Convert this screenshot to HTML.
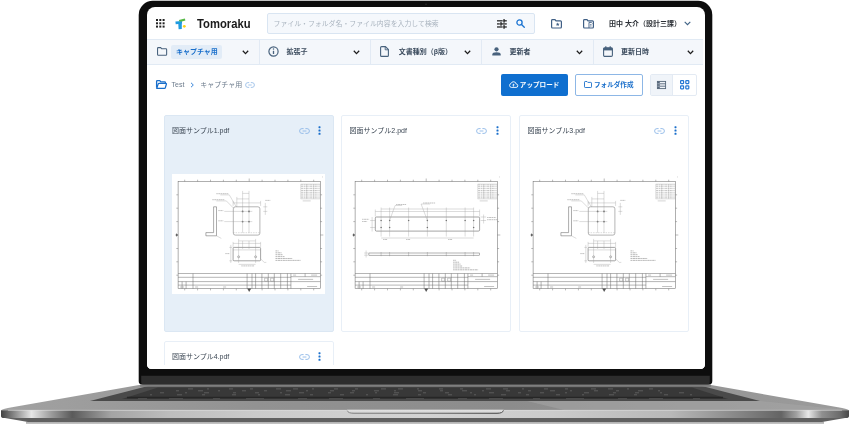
<!DOCTYPE html>
<html lang="ja">
<head>
<meta charset="utf-8">
<title>Tomoraku</title>
<style>
html,body{margin:0;padding:0;background:#fff;}
body{width:850px;height:424px;position:relative;overflow:hidden;font-family:"Liberation Sans","Noto Sans CJK JP",sans-serif;}
#laptop{position:absolute;left:0;top:0;width:850px;height:424px;}
#screen{position:absolute;left:147.2px;top:7px;width:557.6px;height:362px;background:#fff;border-radius:8px 8px 4.5px 4.5px;overflow:hidden;}
#screen *{box-sizing:border-box;}
.abs{position:absolute;}
.t{position:absolute;white-space:nowrap;line-height:10px;font-size:7px;}
.b{font-weight:bold;}
#filter{position:absolute;left:0;top:32px;width:558px;height:26px;background:#f4f7fb;border-top:1px solid #e1e9f3;border-bottom:1px solid #e1e9f3;}
.div{position:absolute;top:33px;width:1px;height:24px;background:#e4ebf4;}
.card{position:absolute;width:170px;height:217px;border:1px solid #e8eff7;border-radius:2px;background:#fff;}
.card.sel{background:#e6eff8;border-color:#dbe7f3;}
.thumb{position:absolute;left:7.2px;top:58.2px;width:153px;height:120px;background:#fff;}
svg{position:absolute;overflow:visible;}
</style>
</head>
<body>
<!-- LAPTOP -->
<svg id="laptop" width="850" height="424" viewBox="0 0 850 424">
<defs>
<linearGradient id="edge" x1="0" x2="1" y1="0" y2="0">
<stop offset="0" stop-color="#424242"/>
<stop offset="0.006" stop-color="#5c5c5c"/>
<stop offset="0.036" stop-color="#e6e6e6"/>
<stop offset="0.060" stop-color="#9a9a9a"/>
<stop offset="0.084" stop-color="#5a5a5a"/>
<stop offset="0.13" stop-color="#a4a4a4"/>
<stop offset="0.2" stop-color="#bebebe"/>
<stop offset="0.3" stop-color="#cbcbcb"/>
<stop offset="0.5" stop-color="#d3d3d3"/>
<stop offset="0.65" stop-color="#cbcbcb"/>
<stop offset="0.79" stop-color="#b8b8b8"/>
<stop offset="0.83" stop-color="#a0a0a0"/>
<stop offset="0.87" stop-color="#868686"/>
<stop offset="0.92" stop-color="#646464"/>
<stop offset="0.938" stop-color="#a0a0a0"/>
<stop offset="0.952" stop-color="#e8e8e8"/>
<stop offset="0.968" stop-color="#909090"/>
<stop offset="0.99" stop-color="#6a6a6a"/>
<stop offset="1" stop-color="#484848"/>
</linearGradient>
<linearGradient id="top" x1="0" x2="1" y1="0" y2="0">
<stop offset="0" stop-color="#a2a2a2"/>
<stop offset="0.3" stop-color="#929292"/>
<stop offset="0.6" stop-color="#8c8c8c"/>
<stop offset="1" stop-color="#9c9c9c"/>
</linearGradient>
<linearGradient id="notch" x1="0" x2="0" y1="0" y2="1">
<stop offset="0" stop-color="#e4e4e4"/>
<stop offset="0.6" stop-color="#d6d6d6"/>
<stop offset="1" stop-color="#b0b0b0"/>
</linearGradient>
<linearGradient id="notchline" x1="347" x2="504" y1="0" y2="0" gradientUnits="userSpaceOnUse">
<stop offset="0" stop-color="#8a8a8a"/>
<stop offset="0.5" stop-color="#777"/>
<stop offset="1" stop-color="#4a4a4a"/>
</linearGradient>
<linearGradient id="shadow" x1="0" x2="0" y1="0" y2="1">
<stop offset="0" stop-color="#a8a8a8"/>
<stop offset="1" stop-color="#c8c8c8"/>
</linearGradient>
</defs>
<!-- shadow strip -->
<path d="M26 421.5 H824 V424 H26 Z" fill="url(#shadow)"/>
<!-- underside -->
<path d="M2 417.5 L848 417.5 L822 422 L28 422 Z" fill="#606060"/>
<!-- top surface -->
<path d="M1 410.3 Q3 408.8 12 407.3 L139 385 L711 385 L838 407.3 Q847 408.8 849 410.3 Z" fill="url(#top)"/>
<path d="M527 401 L760 401 L849 410.3 L565 410.3 Z" fill="#a6a6a6" opacity="0.55"/>
<!-- keyboard well -->
<path d="M90 401 L148 386 L702 386 L760 401 Z" fill="#4a4a4a"/>
<path d="M122 399 L158 387.4 L692 387.4 L728 399 Z" fill="#383838"/>
<path d="M127 397.5 L723 397.5" stroke="#262626" stroke-width="1.4"/>
<g stroke="#8c8c8c" stroke-width="0.8" fill="none" opacity="0.55">
<path d="M188 388.9 H662" stroke-dasharray="5 14 2 20 4 17 3 23 5 12"/>
<path d="M176 390.8 H674" stroke-dasharray="3 19 5 15 2 22 4 18"/>
<path d="M160 392.8 H690" stroke-dasharray="4 21 2 17 5 24 3 19"/>
<path d="M150 394.8 H700" stroke-dasharray="2 25 5 20 3 27 4 22"/>
</g>
<path d="M138 398.6 H712" stroke="#6a6a6a" stroke-width="0.7" stroke-dasharray="9 22 14 30 7 26 18 34" fill="none" opacity="0.7"/>
<!-- front edge -->
<path d="M1 410.2 L849 410.2 L849 416 Q849 418 846 418 L4 418 Q1 418 1 416 Z" fill="url(#edge)"/>
<rect x="8" y="409.8" width="834" height="0.9" fill="#dcdcdc" opacity="0.55"/>
<!-- notch -->
<path d="M347 409.8 L503.6 409.8 Q503 413.6 497 413.6 L353.5 413.6 Q347.5 413.6 347 409.8 Z" fill="url(#notch)"/>
<path d="M347.3 410.6 Q348 413.3 354 413.3 H497 Q502.8 413.3 503.4 410.4" fill="none" stroke="url(#notchline)" stroke-width="1"/>
<!-- lid -->
<path d="M138.7 15 A14.2 14.2 0 0 1 152.9 0.8 H698.1 A14.2 14.2 0 0 1 712.3 15 V381 Q712.3 384.8 708.5 384.8 H142.5 Q138.7 384.8 138.7 381 Z" fill="#0d0d0d"/>
<path d="M141.2 375.8 H709.8 V382 Q709.8 384.8 707 384.8 H144 Q141.2 384.8 141.2 382 Z" fill="#2d2d2d"/>
<rect x="140" y="384.6" width="571" height="2.2" fill="#7e7e7e"/>
<circle cx="426" cy="4.3" r="0.8" fill="#2c2c2c"/>
</svg>

<!-- SCREEN -->
<div id="screen"><div id="ui" class="abs" style="will-change:transform;left:-147.2px;top:-7px;width:850px;height:424px;">
<!-- header -->
<svg style="left:155.5px;top:19.3px" width="9" height="9" viewBox="0 0 9 9" fill="#222">
<rect x="0" y="0" width="2" height="2"/><rect x="3.3" y="0" width="2" height="2"/><rect x="6.6" y="0" width="2" height="2"/>
<rect x="0" y="3.3" width="2" height="2"/><rect x="3.3" y="3.3" width="2" height="2"/><rect x="6.6" y="3.3" width="2" height="2"/>
<rect x="0" y="6.6" width="2" height="2"/><rect x="3.3" y="6.6" width="2" height="2"/><rect x="6.6" y="6.6" width="2" height="2"/>
</svg>
<svg style="left:175px;top:17.5px" width="12" height="12" viewBox="0 0 12 12">
<path d="M0.4 3.6 L6.9 2.9 L7.1 5.6 L6.8 5.6 L6.8 11 L3.6 11.3 L3.3 5.9 L0.7 6.2 Z" fill="#1e9be0"/>
<path d="M3.9 1.9 L9.9 0.4 L10.4 2.5 L7 3.4 L4.4 3.5 Z" fill="#57b947"/>
<circle cx="9.3" cy="8.3" r="1.4" fill="#fbd21a"/>
</svg>
<div class="t b" id="brand" style="left:196.6px;top:14.8px;font-size:12.3px;line-height:18px;color:#1a1a1a;transform:scaleX(0.915);transform-origin:0 0;">Tomoraku</div>
<div class="abs" style="left:266.5px;top:12.9px;width:268.2px;height:21.5px;background:#f5f8fc;border:1px solid #d9e5f2;border-radius:2px;"></div>
<div class="t" style="left:273.5px;top:18.5px;color:#aab4bf;font-size:6.9px;">ファイル・フォルダ名・ファイル内容を入力して検索</div>
<!-- tune icon -->
<svg style="left:497.3px;top:18.7px" width="9.8" height="9.8" viewBox="0 0 9 9" fill="#222">
<rect x="0" y="1.1" width="5.2" height="1.15"/><rect x="5.9" y="0" width="1.15" height="3.4"/><rect x="5.9" y="1.1" width="3.1" height="1.15"/>
<rect x="0" y="3.95" width="2.6" height="1.15"/><rect x="3.1" y="2.8" width="1.15" height="3.4"/><rect x="3.1" y="3.95" width="5.9" height="1.15"/>
<rect x="0" y="6.75" width="5.2" height="1.15"/><rect x="5.9" y="5.6" width="1.15" height="3.4"/><rect x="5.9" y="6.75" width="3.1" height="1.15"/>
</svg>
<!-- search icon -->
<svg style="left:516px;top:18.7px" width="9" height="9" viewBox="0 0 9 9" fill="none" stroke="#1a73d1" stroke-width="1.3">
<circle cx="3.5" cy="3.5" r="2.6"/><path d="M5.5 5.5 L8.3 8.3" stroke-linecap="round"/>
</svg>
<!-- folder star icon -->
<svg style="left:550.6px;top:18.7px" width="11" height="9.6" viewBox="0 0 11 9.6" fill="none" stroke="#3f5f85" stroke-width="1.2">
<path d="M0.6 1.5 Q0.6 0.6 1.5 0.6 H4 L5 1.9 H9.5 Q10.4 1.9 10.4 2.8 V8.1 Q10.4 9 9.5 9 H1.5 Q0.6 9 0.6 8.1 Z"/>
<path d="M6.7 3.4 L7.3 4.7 L8.6 4.8 L7.6 5.7 L7.9 7 L6.7 6.3 L5.5 7 L5.8 5.7 L4.8 4.8 L6.1 4.7 Z" fill="#3f5f85" stroke="none"/>
</svg>
<!-- folder shared icon -->
<svg style="left:582.5px;top:18.7px" width="11" height="9.6" viewBox="0 0 11 9.6" fill="none" stroke="#3f5f85" stroke-width="1.2">
<path d="M0.6 1.5 Q0.6 0.6 1.5 0.6 H4 L5 1.9 H9.5 Q10.4 1.9 10.4 2.8 V8.1 Q10.4 9 9.5 9 H1.5 Q0.6 9 0.6 8.1 Z"/>
<path d="M6 9 V3.4 H8.3 L9.4 4.5" stroke-width="0.9"/><path d="M7 5.6 H8.6 M7 7 H8.6" stroke-width="0.7"/>
</svg>
<div class="t b" style="left:609px;top:18.5px;color:#2c3036;">田中 大介（設計三課）</div>
<svg style="left:683.7px;top:21.4px" width="7" height="5" viewBox="0 0 7 5" fill="none" stroke="#3f6285" stroke-width="1.1"><path d="M0.7 0.8 L3.5 3.7 L6.3 0.8"/></svg>

<!-- filter bar -->
<div class="abs" style="left:147px;top:39px;width:555.5px;height:26.2px;background:#f4f7fb;border-top:1px solid #e1eaf4;border-bottom:1px solid #e1eaf4;"></div>
<div class="abs" style="left:258.8px;top:40px;width:1px;height:24.2px;background:#e2eaf4;"></div>
<div class="abs" style="left:369.9px;top:40px;width:1px;height:24.2px;background:#e2eaf4;"></div>
<div class="abs" style="left:481.4px;top:40px;width:1px;height:24.2px;background:#e2eaf4;"></div>
<div class="abs" style="left:592.9px;top:40px;width:1px;height:24.2px;background:#e2eaf4;"></div>
<!-- folder icon -->
<svg style="left:156.7px;top:47.1px" width="10.2" height="8.8" viewBox="0 0 11 9" preserveAspectRatio="none" fill="none" stroke="#48627d" stroke-width="1.15">
<path d="M0.6 1.4 Q0.6 0.6 1.4 0.6 H4 L5 1.8 H9.6 Q10.4 1.8 10.4 2.6 V7.6 Q10.4 8.4 9.6 8.4 H1.4 Q0.6 8.4 0.6 7.6 Z"/>
</svg>
<div class="abs" style="left:171.4px;top:44.6px;width:51px;height:14.6px;background:#e2ecf7;border-radius:2px;"></div>
<div class="t b" style="left:175.9px;top:47px;color:#1a6fcb;">キャプチャ用</div>
<svg class="chev" style="left:242px;top:50px" width="7" height="5" viewBox="0 0 7 5" fill="none" stroke="#1d1d1d" stroke-width="1.3"><path d="M0.8 0.8 L3.5 3.6 L6.2 0.8"/></svg>
<!-- info icon -->
<svg style="left:267.7px;top:46.3px" width="11" height="11" viewBox="0 0 11 11" fill="none" stroke="#48627d" stroke-width="1">
<circle cx="5.5" cy="5.5" r="4.6" stroke-width="1.2"/><path d="M5.5 4.8 V8" stroke-width="1.3"/><circle cx="5.5" cy="3.1" r="0.75" fill="#48627d" stroke="none"/>
</svg>
<div class="t b" style="left:286.5px;top:47px;color:#3c4c5e;">拡張子</div>
<svg class="chev" style="left:353px;top:50px" width="7" height="5" viewBox="0 0 7 5" fill="none" stroke="#1d1d1d" stroke-width="1.3"><path d="M0.8 0.8 L3.5 3.6 L6.2 0.8"/></svg>
<!-- doc icon -->
<svg style="left:380.2px;top:46px" width="9" height="11" viewBox="0 0 9 11" fill="none" stroke="#48627d" stroke-width="1.1">
<path d="M0.6 1.6 Q0.6 0.6 1.6 0.6 H5.4 L8.4 3.6 V9.4 Q8.4 10.4 7.4 10.4 H1.6 Q0.6 10.4 0.6 9.4 Z"/><path d="M5.2 0.8 V3.8 H8.2" stroke-width="0.9"/>
</svg>
<div class="t b" style="left:398.7px;top:47px;color:#3c4c5e;">文書種別（β版）</div>
<svg class="chev" style="left:464.3px;top:50px" width="7" height="5" viewBox="0 0 7 5" fill="none" stroke="#1d1d1d" stroke-width="1.3"><path d="M0.8 0.8 L3.5 3.6 L6.2 0.8"/></svg>
<!-- person icon -->
<svg style="left:491.5px;top:47px" width="9" height="9" viewBox="0 0 9 9" fill="#48627d">
<circle cx="4.5" cy="2.3" r="2.1"/><path d="M0.3 8.6 V7.4 Q0.3 5.3 4.5 5.3 Q8.7 5.3 8.7 7.4 V8.6 Z"/>
</svg>
<div class="t b" style="left:509.5px;top:47px;color:#3c4c5e;">更新者</div>
<svg class="chev" style="left:575.8px;top:50px" width="7" height="5" viewBox="0 0 7 5" fill="none" stroke="#1d1d1d" stroke-width="1.3"><path d="M0.8 0.8 L3.5 3.6 L6.2 0.8"/></svg>
<!-- calendar icon -->
<svg style="left:602.5px;top:45.6px" width="10" height="11" viewBox="0 0 10 11" fill="none" stroke="#48627d" stroke-width="1.1">
<rect x="0.6" y="1.8" width="8.8" height="8.6" rx="1.2"/><rect x="0.6" y="1.8" width="8.8" height="2.6" fill="#48627d" stroke="none"/><path d="M2.8 0.3 V2.4 M7.2 0.3 V2.4" stroke-width="1.2"/>
</svg>
<div class="t b" style="left:621px;top:47px;color:#3c4c5e;">更新日時</div>
<svg class="chev" style="left:687.3px;top:50px" width="7" height="5" viewBox="0 0 7 5" fill="none" stroke="#1d1d1d" stroke-width="1.3"><path d="M0.8 0.8 L3.5 3.6 L6.2 0.8"/></svg>

<!-- breadcrumb -->
<svg style="left:156.3px;top:79.9px" width="11" height="9" viewBox="0 0 11 9" fill="none" stroke="#1a6fcb" stroke-width="1.3">
<path d="M0.6 7.6 V1.4 Q0.6 0.6 1.4 0.6 H3.8 L4.8 1.8 H8.6 Q9.4 1.8 9.4 2.6 V3.4"/><path d="M0.7 8.2 L2.2 3.9 Q2.4 3.4 3 3.4 H9.9 Q10.6 3.4 10.4 4.1 L9.3 7.8 Q9.1 8.4 8.5 8.4 H1 Z"/>
</svg>
<div class="t" style="left:171.6px;top:80px;color:#6c7b8c;">Test</div>
<svg style="left:190.2px;top:82.2px" width="5" height="6" viewBox="0 0 5 6" fill="none" stroke="#2f80d8" stroke-width="0.95"><path d="M1 0.8 L3.3 3 L1 5.2"/></svg>
<div class="t" style="left:200.3px;top:80px;color:#6c7b8c;">キャプチャ用</div>
<svg class="lnk" style="left:244.8px;top:82px" width="10" height="6" viewBox="0 0 10 6" fill="none" stroke="#9cbfe8" stroke-width="0.9"><path d="M4.2 0.6 H3 A2.4 2.4 0 0 0 3 5.4 H4.2 M5.8 0.6 H7 A2.4 2.4 0 0 1 7 5.4 H5.8 M3.3 3 H6.7"/></svg>

<!-- buttons -->
<div class="abs" style="left:500.6px;top:74px;width:67px;height:21.5px;background:#0f6fcf;border-radius:2px;"></div>
<svg style="left:509.3px;top:81.3px" width="9" height="7" viewBox="0 0 9 7" fill="none" stroke="#fff" stroke-width="0.9"><path d="M2.3 6.4 A2 2 0 0 1 2 2.5 A2.7 2.7 0 0 1 7.2 3 A1.7 1.7 0 0 1 7 6.4 Z"/><path d="M4.5 5.6 V3.2 M3.4 4.2 L4.5 3.1 L5.6 4.2" stroke-width="0.8"/></svg>
<div class="t b" style="left:519.8px;top:80px;color:#fff;font-size:6.6px;">アップロード</div>
<div class="abs" style="left:575px;top:74px;width:68px;height:21.8px;background:#fff;border:1px solid #8db7e6;border-radius:2px;"></div>
<svg style="left:584px;top:81.3px" width="8" height="7" viewBox="0 0 8 7" fill="none" stroke="#1a6fcb" stroke-width="0.9"><path d="M0.5 1.2 Q0.5 0.5 1.2 0.5 H3 L3.8 1.4 H6.8 Q7.5 1.4 7.5 2.1 V5.8 Q7.5 6.5 6.8 6.5 H1.2 Q0.5 6.5 0.5 5.8 Z"/></svg>
<div class="t b" style="left:594px;top:80px;color:#1a6fcb;font-size:6.6px;">フォルダ作成</div>
<div class="abs" style="left:650px;top:74px;width:46.8px;height:21.8px;background:#fff;border:1px solid #e3eaf3;border-radius:2px;"></div>
<div class="abs" style="left:651px;top:75px;width:21.5px;height:19.8px;background:#f0f4f9;border-right:1px solid #e3eaf3;"></div>
<svg style="left:657.2px;top:81.2px" width="9" height="8" viewBox="0 0 9 8"><rect x="0.4" y="0.4" width="8.2" height="7.2" fill="none" stroke="#56677a" stroke-width="0.9"/><rect x="0.4" y="0.4" width="2.4" height="7.2" fill="#56677a"/><path d="M0.4 2.8 H8.6 M0.4 5.2 H8.6" stroke="#56677a" stroke-width="0.9"/><path d="M0.4 2.8 H2.8 M0.4 5.2 H2.8" stroke="#f0f4f9" stroke-width="0.5"/></svg>
<svg style="left:680.2px;top:80.4px" width="9.4" height="9.4" viewBox="0 0 9.4 9.4" fill="none" stroke="#2477d4" stroke-width="1.2"><rect x="0.6" y="0.6" width="3" height="3" rx="0.5"/><rect x="5.8" y="0.6" width="3" height="3" rx="0.5"/><rect x="0.6" y="5.8" width="3" height="3" rx="0.5"/><rect x="5.8" y="5.8" width="3" height="3" rx="0.5"/></svg>

<!-- cards -->
<div class="card sel" style="left:163.5px;top:114.8px;height:217px;"><div class="t" style="left:7.4px;top:10px;color:#3b4653;">図面サンプル1.pdf</div><svg style="left:134px;top:12.5px" width="11" height="6" viewBox="0 0 11 6" fill="none" stroke="#8fb8e8" stroke-width="0.9"><path d="M4.6 0.6 H3 A2.4 2.4 0 0 0 3 5.4 H4.6 M6.4 0.6 H8 A2.4 2.4 0 0 1 8 5.4 H6.4 M3.6 3 H7.4"/></svg><svg style="left:153.5px;top:10.3px" width="3" height="9" viewBox="0 0 3 9" fill="#1a6fcb"><rect x="0.5" y="0.2" width="2" height="2" rx="0.6"/><rect x="0.5" y="3.5" width="2" height="2" rx="0.6"/><rect x="0.5" y="6.8" width="2" height="2" rx="0.6"/></svg><div class="thumb"><svg width="153" height="120" viewBox="0 0 153 120" style="left:0;top:0;overflow:hidden"><g transform="translate(-0.9,-0.3)"><rect x="7" y="7.8" width="142.2" height="107.1" fill="none" stroke="#6e6e6e" stroke-width="0.55"/><path d="M13.6 6.0 V7.8 M13.6 114.9 V116.7 M26.5 6.0 V7.8 M26.5 114.9 V116.7 M39.4 6.0 V7.8 M39.4 114.9 V116.7 M52.3 6.0 V7.8 M52.3 114.9 V116.7 M65.2 6.0 V7.8 M65.2 114.9 V116.7 M78.1 4.8 V7.8 M78.1 114.9 V117.9 M91.0 6.0 V7.8 M91.0 114.9 V116.7 M103.9 6.0 V7.8 M103.9 114.9 V116.7 M116.8 6.0 V7.8 M116.8 114.9 V116.7 M129.7 6.0 V7.8 M129.7 114.9 V116.7 M142.6 6.0 V7.8 M142.6 114.9 V116.7 M5.2 21.1 H7 M149.2 21.1 H151.0 M5.2 34.5 H7 M149.2 34.5 H151.0 M5.2 47.9 H7 M149.2 47.9 H151.0 M4 61.3 H7 M149.2 61.3 H152.2 M5.2 74.8 H7 M149.2 74.8 H151.0 M5.2 88.1 H7 M149.2 88.1 H151.0 M5.2 101.5 H7 M149.2 101.5 H151.0 " stroke="#777" stroke-width="0.5" fill="none"/><path d="M5 59.5 L7 61.3 L5 63.1 Z M76 114.9 L78.1 118 L80.2 114.9 Z" fill="#555"/><path d="M7 99.8 H149.2 M7 103.6 H120 M7 107.9 H149.2 M7 111.4 H120 M21.9 99.8 V114.9 M76 99.8 V114.9 M80.9 99.8 V114.9 M84.5 99.8 V114.9 M90.8 99.8 V114.9 M97.2 99.8 V114.9 M103.2 99.8 V114.9 M109.6 99.8 V114.9 M116.3 99.8 V114.9 M119.8 99.8 V114.9 M119.8 103 H149.2 M134 99.8 V103 M11 107.9 V114.9 M15 107.9 V114.9 " stroke="#6a6a6a" stroke-width="0.5" fill="none"/><path d="M93.5 104.5 h3 v3 h-3 Z M99.5 104.5 h3 v3 h-3 Z" stroke="#777" stroke-width="0.4" fill="none"/><path d="M127 105.7 H142 M136 112.8 H146 M9 113.3 H13 M24 113.3 H27 M52 113.3 H55 M140 101.4 H146 M122 101.4 H125" stroke="#999" stroke-width="0.6" fill="none"/><path d="M130 11.2 H148.6 M130 13.0 H148.6 M130 14.9 H148.6 M130 16.8 H148.6 M130 18.6 H148.6 M130 20.4 H148.6 M130 22.3 H148.6 M130 24.1 H148.6 " stroke="#999" stroke-width="0.55" stroke-dasharray="2.2 0.6 1.2 0.5" fill="none"/><path d="M129.6 10.4 H149.2 V25.2 H129.6 Z M135.6 10.4 V25.2 M142.6 10.4 V25.2" stroke="#aaa" stroke-width="0.35" fill="none"/><path d="M131.6 27.2 H139.6" stroke="#aaa" stroke-width="0.5"/><circle cx="151.3" cy="3.2" r="0.4" fill="#999"/><g transform="translate(1.2,1.2)"><rect x="61" y="31.9" width="26.6" height="28.3" rx="2" fill="none" stroke="#787878" stroke-width="0.55"/><path d="M60.8 57.8 H88.3" stroke="#999" stroke-width="0.35" stroke-dasharray="1.5 1"/><circle cx="70.3" cy="36.5" r="0.9" fill="#666"/><circle cx="76.7" cy="36.5" r="0.9" fill="#666"/><circle cx="70.3" cy="46.7" r="0.9" fill="#666"/><circle cx="76.7" cy="46.7" r="0.9" fill="#666"/><path d="M70.3 16 V58 M76.7 16 V58 M64.5 22 V32 M60.8 26 V31 M88.3 26 V31 M60.8 28 H88.3 M64.5 24 H76.7 M70.3 18.5 H76.7 M52 36.5 H80 M52 46.7 H80 M91 31.9 H95 M91 36.5 H95 M93 28 V40" stroke="#999" stroke-width="0.35" fill="none"/><path d="M64 31.9 L57 20 H48 M61.5 33.5 L54 26 H44" stroke="#999" stroke-width="0.35" fill="none"/><path d="M44 18.8 H56 M40 24.8 H52 M46 35.7 H51 M46 45.9 H51 M93 25.5 H98" stroke="#999" stroke-width="0.6" stroke-dasharray="1.5 0.5 2 0.4" fill="none"/><path d="M41.3 31.9 H44.2 V60.9 H33.6 V57.7 H41.3 Z" fill="none" stroke="#666" stroke-width="0.55"/><path d="M44.2 60.9 L49 63.5" stroke="#999" stroke-width="0.35"/><rect x="60.8" y="72.5" width="27.5" height="13.4" rx="1" fill="none" stroke="#666" stroke-width="0.6"/><path d="M60.8 75 H88.3" stroke="#999" stroke-width="0.35"/><circle cx="66.3" cy="81.9" r="1" fill="none" stroke="#666" stroke-width="0.45"/><circle cx="83.3" cy="81.9" r="1" fill="none" stroke="#666" stroke-width="0.45"/><path d="M66.3 64 V88 M83.3 64 V88 M70.3 66 V74 M76.7 66 V74 M60.8 67 V72 M88.3 67 V72 M60.8 68.5 H88.3 M66.3 66 H83.3 M57 72.5 H60 M57 85.9 H60 M58.5 70 V88 M66.3 89.5 H83.3" stroke="#999" stroke-width="0.35" fill="none"/><path d="M69 91 H82 M53 78.7 H57" stroke="#999" stroke-width="0.6" stroke-dasharray="1.5 0.5 2 0.4"/><path d="M88.3 84 L92 87.5 H94" stroke="#999" stroke-width="0.35" fill="none"/><path d="M103.2 76.00 H106.2 M103.2 77.90 H109.2 M103.2 79.80 H110.7 M103.2 81.70 H112.2 M103.2 83.60 H120.2 M103.2 85.50 H128.2 " stroke="#8a8a8a" stroke-width="0.6" stroke-dasharray="1.6 0.5 2.4 0.4" fill="none"/></g></g></svg></div></div>
<div class="card" style="left:341.2px;top:114.8px;height:217px;"><div class="t" style="left:7.4px;top:10px;color:#3b4653;">図面サンプル2.pdf</div><svg style="left:134px;top:12.5px" width="11" height="6" viewBox="0 0 11 6" fill="none" stroke="#8fb8e8" stroke-width="0.9"><path d="M4.6 0.6 H3 A2.4 2.4 0 0 0 3 5.4 H4.6 M6.4 0.6 H8 A2.4 2.4 0 0 1 8 5.4 H6.4 M3.6 3 H7.4"/></svg><svg style="left:153.5px;top:10.3px" width="3" height="9" viewBox="0 0 3 9" fill="#1a6fcb"><rect x="0.5" y="0.2" width="2" height="2" rx="0.6"/><rect x="0.5" y="3.5" width="2" height="2" rx="0.6"/><rect x="0.5" y="6.8" width="2" height="2" rx="0.6"/></svg><div class="thumb" style="left:7px;top:58px"><svg width="153" height="120" viewBox="0 0 153 120" style="left:0;top:0;overflow:hidden"><g transform="translate(-0.9,-0.3)"><rect x="7" y="7.8" width="142.2" height="107.1" fill="none" stroke="#6e6e6e" stroke-width="0.55"/><path d="M13.6 6.0 V7.8 M13.6 114.9 V116.7 M26.5 6.0 V7.8 M26.5 114.9 V116.7 M39.4 6.0 V7.8 M39.4 114.9 V116.7 M52.3 6.0 V7.8 M52.3 114.9 V116.7 M65.2 6.0 V7.8 M65.2 114.9 V116.7 M78.1 4.8 V7.8 M78.1 114.9 V117.9 M91.0 6.0 V7.8 M91.0 114.9 V116.7 M103.9 6.0 V7.8 M103.9 114.9 V116.7 M116.8 6.0 V7.8 M116.8 114.9 V116.7 M129.7 6.0 V7.8 M129.7 114.9 V116.7 M142.6 6.0 V7.8 M142.6 114.9 V116.7 M5.2 21.1 H7 M149.2 21.1 H151.0 M5.2 34.5 H7 M149.2 34.5 H151.0 M5.2 47.9 H7 M149.2 47.9 H151.0 M4 61.3 H7 M149.2 61.3 H152.2 M5.2 74.8 H7 M149.2 74.8 H151.0 M5.2 88.1 H7 M149.2 88.1 H151.0 M5.2 101.5 H7 M149.2 101.5 H151.0 " stroke="#777" stroke-width="0.5" fill="none"/><path d="M5 59.5 L7 61.3 L5 63.1 Z M76 114.9 L78.1 118 L80.2 114.9 Z" fill="#555"/><path d="M7 99.8 H149.2 M7 103.6 H120 M7 107.9 H149.2 M7 111.4 H120 M21.9 99.8 V114.9 M76 99.8 V114.9 M80.9 99.8 V114.9 M84.5 99.8 V114.9 M90.8 99.8 V114.9 M97.2 99.8 V114.9 M103.2 99.8 V114.9 M109.6 99.8 V114.9 M116.3 99.8 V114.9 M119.8 99.8 V114.9 M119.8 103 H149.2 M134 99.8 V103 M11 107.9 V114.9 M15 107.9 V114.9 " stroke="#6a6a6a" stroke-width="0.5" fill="none"/><path d="M93.5 104.5 h3 v3 h-3 Z M99.5 104.5 h3 v3 h-3 Z" stroke="#777" stroke-width="0.4" fill="none"/><path d="M127 105.7 H142 M136 112.8 H146 M9 113.3 H13 M24 113.3 H27 M52 113.3 H55 M140 101.4 H146 M122 101.4 H125" stroke="#999" stroke-width="0.6" fill="none"/><path d="M130 11.2 H148.6 M130 13.0 H148.6 M130 14.9 H148.6 M130 16.8 H148.6 M130 18.6 H148.6 M130 20.4 H148.6 M130 22.3 H148.6 M130 24.1 H148.6 " stroke="#999" stroke-width="0.55" stroke-dasharray="2.2 0.6 1.2 0.5" fill="none"/><path d="M129.6 10.4 H149.2 V25.2 H129.6 Z M135.6 10.4 V25.2 M142.6 10.4 V25.2" stroke="#aaa" stroke-width="0.35" fill="none"/><path d="M131.6 27.2 H139.6" stroke="#aaa" stroke-width="0.5"/><circle cx="151.3" cy="3.2" r="0.4" fill="#999"/><g transform="translate(2,0.8)"><rect x="25.2" y="42.5" width="104.3" height="14.1" rx="1.2" fill="none" stroke="#666" stroke-width="0.6"/><circle cx="31" cy="46" r="0.75" fill="#666"/><circle cx="39.5" cy="46" r="0.75" fill="#666"/><circle cx="58.5" cy="46" r="0.75" fill="#666"/><circle cx="77.3" cy="46" r="0.75" fill="#666"/><circle cx="96.2" cy="46" r="0.75" fill="#666"/><circle cx="115" cy="46" r="0.75" fill="#666"/><circle cx="123.5" cy="46" r="0.75" fill="#666"/><circle cx="31" cy="53" r="0.75" fill="#666"/><circle cx="39.5" cy="53" r="0.75" fill="#666"/><circle cx="77.3" cy="53" r="0.75" fill="#666"/><circle cx="123.5" cy="53" r="0.75" fill="#666"/><path d="M31 33 V62 M39.5 33 V62 M58.5 33 V62 M77.3 33 V62 M96.2 33 V62 M115 33 V62 M123.5 33 V62 M25.2 35 V42 M129.5 35 V42 M25.2 37 H129.5 M31 34.5 H123.5 M20 46 H25 M20 53 H25 M22 42.5 V57 M130.5 42.5 H136 M130.5 46 H136 M133.5 40 V49 M31 63.5 H39.5 M39.5 63.5 H77.3 M77.3 63.5 H123.5 " stroke="#999" stroke-width="0.35" fill="none"/><path d="M39.5 46 L45 31 H52 M77.3 46 L71 29.5 H80" stroke="#999" stroke-width="0.35" fill="none"/><path d="M46 30 H56 M73 28.5 H85 M12 44.8 H19 M12 47 H17 M137 43 H146 M137 45.2 H148 M33 65 H37 M56 65 H60 M98 65 H102" stroke="#999" stroke-width="0.6" stroke-dasharray="1.5 0.5 2 0.4" fill="none"/><rect x="18.8" y="78.5" width="110.7" height="2.2" fill="none" stroke="#666" stroke-width="0.5"/><path d="M31 77.5 V81.7 M39.5 77.5 V81.7 M58.5 77.5 V81.7 M77.3 77.5 V81.7 M96.2 77.5 V81.7 M115 77.5 V81.7 M123.5 77.5 V81.7 " stroke="#888" stroke-width="0.4"/><path d="M14 78.5 H18 M14 80.7 H18 M16 76 V83" stroke="#999" stroke-width="0.35"/><path d="M103 85.80 H106 M103 87.70 H109 M103 89.60 H110.5 M103 91.50 H112 M103 93.40 H120 M103 95.30 H128 " stroke="#8a8a8a" stroke-width="0.6" stroke-dasharray="1.6 0.5 2.4 0.4" fill="none"/></g></g></svg></div></div>
<div class="card" style="left:519.2px;top:114.8px;height:217px;"><div class="t" style="left:7.4px;top:10px;color:#3b4653;">図面サンプル3.pdf</div><svg style="left:134px;top:12.5px" width="11" height="6" viewBox="0 0 11 6" fill="none" stroke="#8fb8e8" stroke-width="0.9"><path d="M4.6 0.6 H3 A2.4 2.4 0 0 0 3 5.4 H4.6 M6.4 0.6 H8 A2.4 2.4 0 0 1 8 5.4 H6.4 M3.6 3 H7.4"/></svg><svg style="left:153.5px;top:10.3px" width="3" height="9" viewBox="0 0 3 9" fill="#1a6fcb"><rect x="0.5" y="0.2" width="2" height="2" rx="0.6"/><rect x="0.5" y="3.5" width="2" height="2" rx="0.6"/><rect x="0.5" y="6.8" width="2" height="2" rx="0.6"/></svg><div class="thumb" style="left:6.6px;top:58.2px"><svg width="153" height="120" viewBox="0 0 153 120" style="left:0;top:0;overflow:hidden"><g transform="translate(-0.9,-0.3)"><rect x="7" y="7.8" width="142.2" height="107.1" fill="none" stroke="#6e6e6e" stroke-width="0.55"/><path d="M13.6 6.0 V7.8 M13.6 114.9 V116.7 M26.5 6.0 V7.8 M26.5 114.9 V116.7 M39.4 6.0 V7.8 M39.4 114.9 V116.7 M52.3 6.0 V7.8 M52.3 114.9 V116.7 M65.2 6.0 V7.8 M65.2 114.9 V116.7 M78.1 4.8 V7.8 M78.1 114.9 V117.9 M91.0 6.0 V7.8 M91.0 114.9 V116.7 M103.9 6.0 V7.8 M103.9 114.9 V116.7 M116.8 6.0 V7.8 M116.8 114.9 V116.7 M129.7 6.0 V7.8 M129.7 114.9 V116.7 M142.6 6.0 V7.8 M142.6 114.9 V116.7 M5.2 21.1 H7 M149.2 21.1 H151.0 M5.2 34.5 H7 M149.2 34.5 H151.0 M5.2 47.9 H7 M149.2 47.9 H151.0 M4 61.3 H7 M149.2 61.3 H152.2 M5.2 74.8 H7 M149.2 74.8 H151.0 M5.2 88.1 H7 M149.2 88.1 H151.0 M5.2 101.5 H7 M149.2 101.5 H151.0 " stroke="#777" stroke-width="0.5" fill="none"/><path d="M5 59.5 L7 61.3 L5 63.1 Z M76 114.9 L78.1 118 L80.2 114.9 Z" fill="#555"/><path d="M7 99.8 H149.2 M7 103.6 H120 M7 107.9 H149.2 M7 111.4 H120 M21.9 99.8 V114.9 M76 99.8 V114.9 M80.9 99.8 V114.9 M84.5 99.8 V114.9 M90.8 99.8 V114.9 M97.2 99.8 V114.9 M103.2 99.8 V114.9 M109.6 99.8 V114.9 M116.3 99.8 V114.9 M119.8 99.8 V114.9 M119.8 103 H149.2 M134 99.8 V103 M11 107.9 V114.9 M15 107.9 V114.9 " stroke="#6a6a6a" stroke-width="0.5" fill="none"/><path d="M93.5 104.5 h3 v3 h-3 Z M99.5 104.5 h3 v3 h-3 Z" stroke="#777" stroke-width="0.4" fill="none"/><path d="M127 105.7 H142 M136 112.8 H146 M9 113.3 H13 M24 113.3 H27 M52 113.3 H55 M140 101.4 H146 M122 101.4 H125" stroke="#999" stroke-width="0.6" fill="none"/><path d="M130 11.2 H148.6 M130 13.0 H148.6 M130 14.9 H148.6 M130 16.8 H148.6 M130 18.6 H148.6 M130 20.4 H148.6 M130 22.3 H148.6 M130 24.1 H148.6 " stroke="#999" stroke-width="0.55" stroke-dasharray="2.2 0.6 1.2 0.5" fill="none"/><path d="M129.6 10.4 H149.2 V25.2 H129.6 Z M135.6 10.4 V25.2 M142.6 10.4 V25.2" stroke="#aaa" stroke-width="0.35" fill="none"/><path d="M131.6 27.2 H139.6" stroke="#aaa" stroke-width="0.5"/><circle cx="151.3" cy="3.2" r="0.4" fill="#999"/><g transform="translate(1.2,1.2)"><rect x="61" y="31.9" width="26.6" height="28.3" rx="2" fill="none" stroke="#787878" stroke-width="0.55"/><path d="M60.8 57.8 H88.3" stroke="#999" stroke-width="0.35" stroke-dasharray="1.5 1"/><circle cx="70.3" cy="36.5" r="0.9" fill="#666"/><circle cx="76.7" cy="36.5" r="0.9" fill="#666"/><circle cx="70.3" cy="46.7" r="0.9" fill="#666"/><circle cx="76.7" cy="46.7" r="0.9" fill="#666"/><path d="M70.3 16 V58 M76.7 16 V58 M64.5 22 V32 M60.8 26 V31 M88.3 26 V31 M60.8 28 H88.3 M64.5 24 H76.7 M70.3 18.5 H76.7 M52 36.5 H80 M52 46.7 H80 M91 31.9 H95 M91 36.5 H95 M93 28 V40" stroke="#999" stroke-width="0.35" fill="none"/><path d="M64 31.9 L57 20 H48 M61.5 33.5 L54 26 H44" stroke="#999" stroke-width="0.35" fill="none"/><path d="M44 18.8 H56 M40 24.8 H52 M46 35.7 H51 M46 45.9 H51 M93 25.5 H98" stroke="#999" stroke-width="0.6" stroke-dasharray="1.5 0.5 2 0.4" fill="none"/><path d="M41.3 31.9 H44.2 V60.9 H33.6 V57.7 H41.3 Z" fill="none" stroke="#666" stroke-width="0.55"/><path d="M44.2 60.9 L49 63.5" stroke="#999" stroke-width="0.35"/><rect x="60.8" y="72.5" width="27.5" height="13.4" rx="1" fill="none" stroke="#666" stroke-width="0.6"/><path d="M60.8 75 H88.3" stroke="#999" stroke-width="0.35"/><circle cx="66.3" cy="81.9" r="1" fill="none" stroke="#666" stroke-width="0.45"/><circle cx="83.3" cy="81.9" r="1" fill="none" stroke="#666" stroke-width="0.45"/><path d="M66.3 64 V88 M83.3 64 V88 M70.3 66 V74 M76.7 66 V74 M60.8 67 V72 M88.3 67 V72 M60.8 68.5 H88.3 M66.3 66 H83.3 M57 72.5 H60 M57 85.9 H60 M58.5 70 V88 M66.3 89.5 H83.3" stroke="#999" stroke-width="0.35" fill="none"/><path d="M69 91 H82 M53 78.7 H57" stroke="#999" stroke-width="0.6" stroke-dasharray="1.5 0.5 2 0.4"/><path d="M88.3 84 L92 87.5 H94" stroke="#999" stroke-width="0.35" fill="none"/><path d="M103.2 76.00 H106.2 M103.2 77.90 H109.2 M103.2 79.80 H110.7 M103.2 81.70 H112.2 M103.2 83.60 H120.2 M103.2 85.50 H128.2 " stroke="#8a8a8a" stroke-width="0.6" stroke-dasharray="1.6 0.5 2.4 0.4" fill="none"/></g></g></svg></div></div>
<div class="card" style="left:163.5px;top:340.5px;height:60px;"><div class="t" style="left:7.4px;top:10px;color:#3b4653;">図面サンプル4.pdf</div><svg style="left:134px;top:12.5px" width="11" height="6" viewBox="0 0 11 6" fill="none" stroke="#8fb8e8" stroke-width="0.9"><path d="M4.6 0.6 H3 A2.4 2.4 0 0 0 3 5.4 H4.6 M6.4 0.6 H8 A2.4 2.4 0 0 1 8 5.4 H6.4 M3.6 3 H7.4"/></svg><svg style="left:153.5px;top:10.3px" width="3" height="9" viewBox="0 0 3 9" fill="#1a6fcb"><rect x="0.5" y="0.2" width="2" height="2" rx="0.6"/><rect x="0.5" y="3.5" width="2" height="2" rx="0.6"/><rect x="0.5" y="6.8" width="2" height="2" rx="0.6"/></svg></div>
<div class="abs" style="left:147px;top:364.6px;width:558px;height:6px;background:#fff;"></div>
</div></div>
</body>
</html>
